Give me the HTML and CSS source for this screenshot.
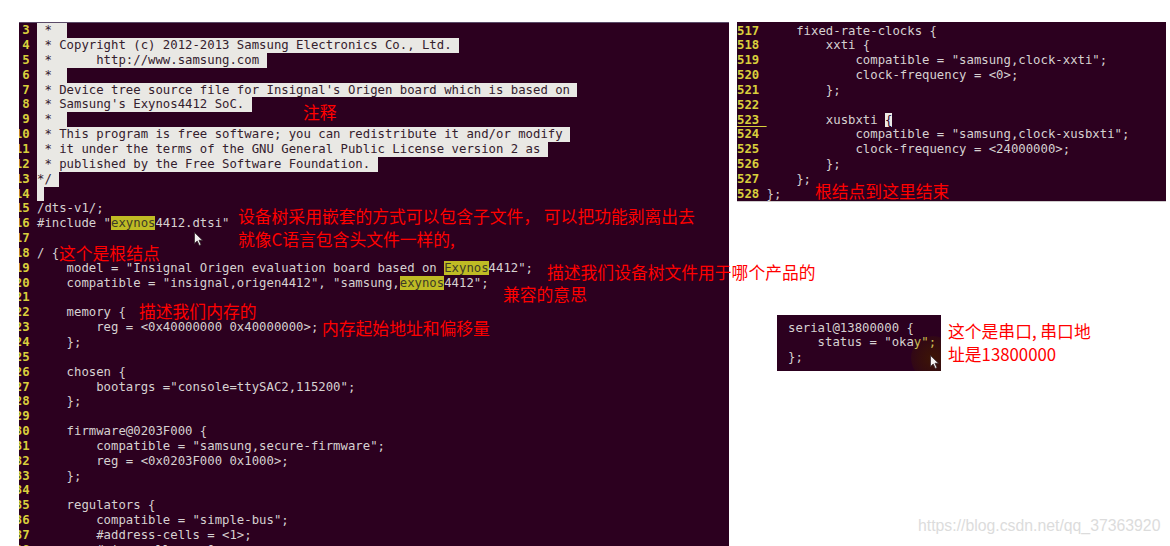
FILE: index.html
```html
<!DOCTYPE html>
<html lang="zh-CN">
<head>
<meta charset="utf-8">
<title>exynos4412-origen.dts 设备树</title>
<link rel="stylesheet" href="styles.css">
</head>
<body>
<div class="page">
  <section class="term term-main">
    <div class="ln first"><span class="num">2</span><span class="code"> * Insignal's <span class="hl">Exynos</span>4412 based Origen board device tree source</span></div>
    <div class="ln"><span class="num">3</span><span class="code"><span class="sel"> *  </span></span></div>
    <div class="ln"><span class="num">4</span><span class="code"><span class="sel"> * Copyright (c) 2012-2013 Samsung Electronics Co., Ltd. </span></span></div>
    <div class="ln"><span class="num">5</span><span class="code"><span class="sel"> *      http://www.samsung.com </span></span></div>
    <div class="ln"><span class="num">6</span><span class="code"><span class="sel"> *  </span></span></div>
    <div class="ln"><span class="num">7</span><span class="code"><span class="sel"> * Device tree source file for Insignal's Origen board which is based on </span></span></div>
    <div class="ln"><span class="num">8</span><span class="code"><span class="sel"> * Samsung's Exynos4412 SoC. </span></span></div>
    <div class="ln"><span class="num">9</span><span class="code"><span class="sel"> *  </span></span></div>
    <div class="ln"><span class="num">10</span><span class="code"><span class="sel"> * This program is free software; you can redistribute it and/or modify </span></span></div>
    <div class="ln"><span class="num">11</span><span class="code"><span class="sel"> * it under the terms of the GNU General Public License version 2 as </span></span></div>
    <div class="ln"><span class="num">12</span><span class="code"><span class="sel"> * published by the Free Software Foundation. </span></span></div>
    <div class="ln"><span class="num">13</span><span class="code"><span class="sel">*/ </span></span></div>
    <div class="ln"><span class="num">14</span><span class="code"><span class="sel"> </span></span></div>
    <div class="ln"><span class="num">15</span><span class="code">/dts-v1/;</span></div>
    <div class="ln"><span class="num">16</span><span class="code">#include "<span class="hl">exynos</span>4412.dtsi"</span></div>
    <div class="ln"><span class="num">17</span><span class="code"></span></div>
    <div class="ln"><span class="num">18</span><span class="code">/ {</span></div>
    <div class="ln"><span class="num">19</span><span class="code">    model = "Insignal Origen evaluation board based on <span class="hl">Exynos</span>4412";</span></div>
    <div class="ln"><span class="num">20</span><span class="code">    compatible = "insignal,origen4412", "samsung,<span class="hl">exynos</span>4412";</span></div>
    <div class="ln"><span class="num">21</span><span class="code"></span></div>
    <div class="ln"><span class="num">22</span><span class="code">    memory {</span></div>
    <div class="ln"><span class="num">23</span><span class="code">        reg = &lt;0x40000000 0x40000000&gt;;</span></div>
    <div class="ln"><span class="num">24</span><span class="code">    };</span></div>
    <div class="ln"><span class="num">25</span><span class="code"></span></div>
    <div class="ln"><span class="num">26</span><span class="code">    chosen {</span></div>
    <div class="ln"><span class="num">27</span><span class="code">        bootargs ="console=ttySAC2,115200";</span></div>
    <div class="ln"><span class="num">28</span><span class="code">    };</span></div>
    <div class="ln"><span class="num">29</span><span class="code"></span></div>
    <div class="ln"><span class="num">30</span><span class="code">    firmware@0203F000 {</span></div>
    <div class="ln"><span class="num">31</span><span class="code">        compatible = "samsung,secure-firmware";</span></div>
    <div class="ln"><span class="num">32</span><span class="code">        reg = &lt;0x0203F000 0x1000&gt;;</span></div>
    <div class="ln"><span class="num">33</span><span class="code">    };</span></div>
    <div class="ln"><span class="num">34</span><span class="code"></span></div>
    <div class="ln"><span class="num">35</span><span class="code">    regulators {</span></div>
    <div class="ln"><span class="num">36</span><span class="code">        compatible = "simple-bus";</span></div>
    <div class="ln"><span class="num">37</span><span class="code">        #address-cells = &lt;1&gt;;</span></div>
    <div class="ln"><span class="num">38</span><span class="code">        #size-cells = &lt;0&gt;;</span></div>
  </section>

  <aside class="side">
    <section class="term term-clock">
      <div class="ln"><span class="num">517 </span><span class="code">    fixed-rate-clocks {</span></div>
      <div class="ln"><span class="num">518 </span><span class="code">        xxti {</span></div>
      <div class="ln"><span class="num">519 </span><span class="code">            compatible = "samsung,clock-xxti";</span></div>
      <div class="ln"><span class="num">520 </span><span class="code">            clock-frequency = &lt;0&gt;;</span></div>
      <div class="ln"><span class="num">521 </span><span class="code">        };</span></div>
      <div class="ln"><span class="num">522 </span><span class="code"></span></div>
      <div class="ln"><span class="num cur">523 </span><span class="code">        xusbxti <span class="cursor">{</span></span></div>
      <div class="ln"><span class="num">524 </span><span class="code">            compatible = "samsung,clock-xusbxti";</span></div>
      <div class="ln"><span class="num">525 </span><span class="code">            clock-frequency = &lt;24000000&gt;;</span></div>
      <div class="ln"><span class="num">526 </span><span class="code">        };</span></div>
      <div class="ln"><span class="num">527 </span><span class="code">    };</span></div>
      <div class="ln"><span class="num">528 </span><span class="code">};</span></div>
    </section>

    <div class="serial-row">
      <section class="term term-serial">
        <span class="glow"></span>
        <div class="ln"><span class="code">serial@13800000 {</span></div>
        <div class="ln"><span class="code">    status = "oka<span class="lit">y";</span></span></div>
        <div class="ln"><span class="code">};</span></div>
        <svg class="pointer pointer-serial" viewBox="0 0 9 14" aria-hidden="true"><path d="M0.5 0.5 L0.5 11.5 L3.2 9 L5.3 13.5 L7 12.7 L5 8.3 L8.5 8.3 Z" fill="#f2f0f0" stroke="#3a2a30" stroke-width="0.8"/></svg>
      </section>
      <div class="note-serial">
        <div>这个是串口, 串口地</div>
        <div>址是13800000</div>
      </div>
    </div>
  </aside>
</div>

<svg class="pointer pointer-main" viewBox="0 0 9 14" aria-hidden="true"><path d="M0.5 0.5 L0.5 11.5 L3.2 9 L5.3 13.5 L7 12.7 L5 8.3 L8.5 8.3 Z" fill="#f2f0f0" stroke="#3a2a30" stroke-width="0.8"/></svg>

<div class="note n-comment">注释</div>
<div class="note n-include1">设备树采用嵌套的方式可以包含子文件， 可以把功能剥离出去</div>
<div class="note n-include2">就像C语言包含头文件一样的,</div>
<div class="note n-root">这个是根结点</div>
<div class="note n-compat1">描述我们设备树文件用于哪个产品的</div>
<div class="note n-compat2">兼容的意思</div>
<div class="note n-memory">描述我们内存的</div>
<div class="note n-reg">内存起始地址和偏移量</div>
<div class="note n-end">根结点到这里结束</div>

<div class="watermark">https://blog.csdn.net/qq_37363920</div>
</body>
</html>
```

FILE: styles.css
```css
* { box-sizing: border-box; }

html, body {
  margin: 0;
  padding: 0;
}

body {
  position: relative;
  width: 1170px;
  height: 546px;
  overflow: hidden;
  background: #ffffff;
  font-family: "DejaVu Sans Mono", monospace;
}

.page {
  display: flex;
  align-items: flex-start;
  gap: 8px;
  height: 546px;
  padding: 22px 0 0 19px;
}

/* terminal panels */
.term {
  background: #2c001f;
  color: #d6d1d1;
  font-family: "DejaVu Sans Mono", "Liberation Mono", monospace;
  font-size: 12.3px;
  line-height: 14.85px;
  overflow: hidden;
}

.ln {
  display: flex;
  height: 14.85px;
  white-space: pre;
}

.num {
  flex: none;
  display: flex;
  justify-content: flex-end;
  color: #d9cf3c;
  font-weight: bold;
  white-space: pre;
}

.code {
  white-space: pre;
}

.sel {
  display: inline-block;
  background: #e9e8e4;
  color: #34202d;
}

.hl {
  background: #bfbb24;
  color: #3e3b27;
}

.cursor {
  background: #ecebe7;
  color: #2c001f;
}

/* main file panel */
.term-main {
  flex: none;
  width: 710px;
  height: 524px;
  border-top: 1px solid #5b4b68;
}

.term-main .first {
  margin-top: -14.6px;
}

.term-main .num {
  width: 10.6px;
  margin-right: 7.4px;
}

/* right column */
.side {
  flex: none;
  width: 429px;
  display: flex;
  flex-direction: column;
}

.term-clock {
  height: 180px;
  padding-top: 1.5px;
  border-bottom: 1px solid #cfcccc;
}

.term-clock .num {
  width: 29.6px;
  justify-content: flex-start;
}

.term-clock .num.cur {
  text-decoration: underline;
  text-underline-offset: 2px;
}

.serial-row {
  display: flex;
  align-items: flex-start;
  gap: 7px;
  margin-top: 113px;
  margin-left: 40px;
}

.term-serial {
  position: relative;
  flex: none;
  width: 164px;
  height: 56px;
  padding: 5.6px 0 0 11px;
}

.term-serial .ln {
  position: relative;
  z-index: 1;
}

.lit {
  color: #cbbf55;
}

.glow {
  position: absolute;
  left: 134px;
  top: 21px;
  width: 44px;
  height: 44px;
  border-radius: 50%;
  background: radial-gradient(circle, rgba(62, 22, 4, 0.95) 0%, rgba(58, 18, 8, 0.7) 45%, rgba(44, 0, 31, 0) 100%);
}

.pointer {
  position: absolute;
  width: 9px;
  height: 14px;
  z-index: 2;
}

.pointer-main {
  left: 194px;
  top: 232px;
}

.pointer-serial {
  left: 153px;
  top: 40px;
}

/* red annotations */
.note,
.note-serial {
  color: #ff0000;
  font-family: "Noto Sans CJK SC", "Noto Sans", sans-serif;
  font-size: 16.8px;
  line-height: 23px;
  white-space: nowrap;
}

.note {
  position: absolute;
  z-index: 3;
}

.note-serial {
  margin-top: 5px;
}

.n-comment  { left: 303px; top: 101px; }
.n-include1 { left: 238px; top: 205px; }
.n-include2 { left: 238px; top: 228px; }
.n-root     { left: 59px;  top: 242px; }
.n-compat1  { left: 547px; top: 261px; }
.n-compat2  { left: 503px; top: 283px; }
.n-memory   { left: 139px; top: 300px; }
.n-reg      { left: 322px; top: 317px; }
.n-end      { left: 815px; top: 180px; }

.watermark {
  position: absolute;
  left: 918px;
  top: 518px;
  font-family: "Liberation Sans", Arial, sans-serif;
  font-size: 15.8px;
  line-height: 16px;
  color: #dcdcdc;
  white-space: nowrap;
}
```
